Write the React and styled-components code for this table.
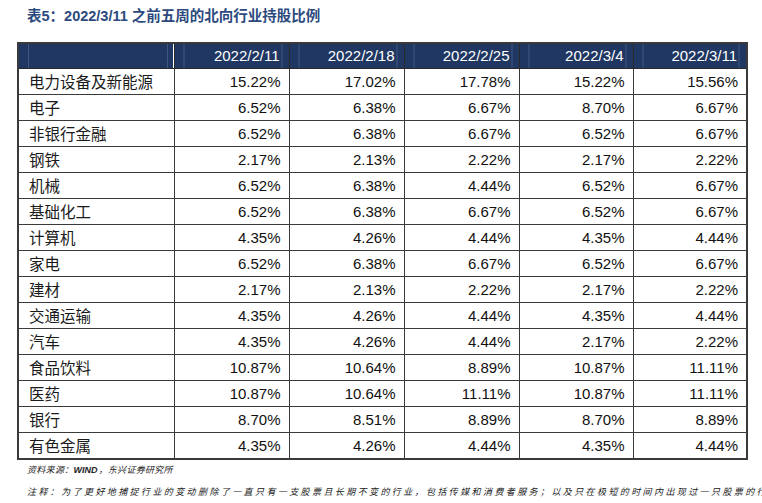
import React from "react";
import styled, { createGlobalStyle } from "styled-components";

const Global = createGlobalStyle`
  html, body { margin: 0; padding: 0; background: #fff; }
  body { font-family: "Liberation Sans", "Noto Sans CJK SC", sans-serif; }
`;

const Page = styled.div`
  width: 762px;
  height: 503px;
  overflow: hidden;
  padding: 7px 0 0 17px;
  box-sizing: border-box;
`;

const Title = styled.h1`
  margin: 0 0 17px 10px;
  font-family: "Liberation Sans", "Noto Sans CJK SC", sans-serif;
  font-size: 14.5px;
  font-weight: 700;
  line-height: 18px;
  color: #2c4a7e;
  white-space: nowrap;
`;

const Table = styled.table`
  border-collapse: collapse;
  table-layout: fixed;
  width: 729px;
  border: 2px solid #3a3a3a;
`;

const HeadCell = styled.th`
  height: 24px;
  padding: 0 9px 0 0;
  background-color: #1f3762;
  background-image: linear-gradient(
    to right,
    transparent 9px,
    #3f5784 9px,
    #3f5784 10px,
    transparent 10px,
    transparent calc(100% - 7px),
    #3f5784 calc(100% - 7px),
    #3f5784 calc(100% - 6px),
    transparent calc(100% - 6px),
    transparent calc(100% - 1px),
    ${(p) => (p.$first ? "#ffffff" : "transparent")} calc(100% - 1px)
  );
  border: 1px solid #2a2a2a;
  color: #ffffff;
  font-family: "Liberation Sans", sans-serif;
  font-size: 15px;
  font-weight: 400;
  text-align: right;
  line-height: 24px;
`;

const NameCell = styled.td`
  height: 25px;
  padding: 0 0 0 10px;
  border: 1px solid #3a3a3a;
  font-family: "Noto Sans CJK SC", sans-serif;
  font-size: 15.5px;
  color: #1a1a1a;
  text-align: left;
  line-height: 25px;
  white-space: nowrap;
`;

const ValueCell = styled.td`
  height: 25px;
  padding: 0 8px 0 0;
  border: 1px solid #3a3a3a;
  font-family: "Liberation Sans", sans-serif;
  font-size: 15px;
  color: #111;
  text-align: right;
  line-height: 25px;
`;

const Note = styled.p`
  margin: ${(p) => p.$mt}px 0 0 10px;
  font-family: "Liberation Sans", "Noto Sans CJK SC", sans-serif;
  font-style: italic;
  font-size: 9px;
  line-height: 12px;
  letter-spacing: ${(p) => p.$ls}px;
  color: #222;
  white-space: nowrap;
`;

const Strong = styled.span`
  font-weight: 700;
  letter-spacing: 0;
  margin-right: 1px;
`;

const dates = ["2022/2/11", "2022/2/18", "2022/2/25", "2022/3/4", "2022/3/11"];
const widths = [156, 115, 115, 115, 114, 114];

const rows = [
  ["电力设备及新能源", "15.22%", "17.02%", "17.78%", "15.22%", "15.56%"],
  ["电子", "6.52%", "6.38%", "6.67%", "8.70%", "6.67%"],
  ["非银行金融", "6.52%", "6.38%", "6.67%", "6.52%", "6.67%"],
  ["钢铁", "2.17%", "2.13%", "2.22%", "2.17%", "2.22%"],
  ["机械", "6.52%", "6.38%", "4.44%", "6.52%", "6.67%"],
  ["基础化工", "6.52%", "6.38%", "6.67%", "6.52%", "6.67%"],
  ["计算机", "4.35%", "4.26%", "4.44%", "4.35%", "4.44%"],
  ["家电", "6.52%", "6.38%", "6.67%", "6.52%", "6.67%"],
  ["建材", "2.17%", "2.13%", "2.22%", "2.17%", "2.22%"],
  ["交通运输", "4.35%", "4.26%", "4.44%", "4.35%", "4.44%"],
  ["汽车", "4.35%", "4.26%", "4.44%", "2.17%", "2.22%"],
  ["食品饮料", "10.87%", "10.64%", "8.89%", "10.87%", "11.11%"],
  ["医药", "10.87%", "10.64%", "11.11%", "10.87%", "11.11%"],
  ["银行", "8.70%", "8.51%", "8.89%", "8.70%", "8.89%"],
  ["有色金属", "4.35%", "4.26%", "4.44%", "4.35%", "4.44%"],
];

export default function App() {
  return (
    <>
      <Global />
      <Page>
        <Title>表5：2022/3/11 之前五周的北向行业持股比例</Title>
        <Table>
          <colgroup>
            {widths.map((w, i) => (
              <col key={i} style={{ width: w }} />
            ))}
          </colgroup>
          <thead>
            <tr>
              <HeadCell $first />
              {dates.map((d) => (
                <HeadCell key={d}>{d}</HeadCell>
              ))}
            </tr>
          </thead>
          <tbody>
            {rows.map(([name, ...vals]) => (
              <tr key={name}>
                <NameCell>{name}</NameCell>
                {vals.map((v, i) => (
                  <ValueCell key={i}>{v}</ValueCell>
                ))}
              </tr>
            ))}
          </tbody>
        </Table>
        <Note $mt={4} $ls={0.3}>
          资料来源：<Strong>WIND</Strong>，东兴证券研究所
        </Note>
        <Note $mt={10} $ls={2.4}>
          注释：为了更好地捕捉行业的变动删除了一直只有一支股票且长期不变的行业，包括传媒和消费者服务；以及只在极短的时间内出现过一只股票的行业
        </Note>
      </Page>
    </>
  );
}
